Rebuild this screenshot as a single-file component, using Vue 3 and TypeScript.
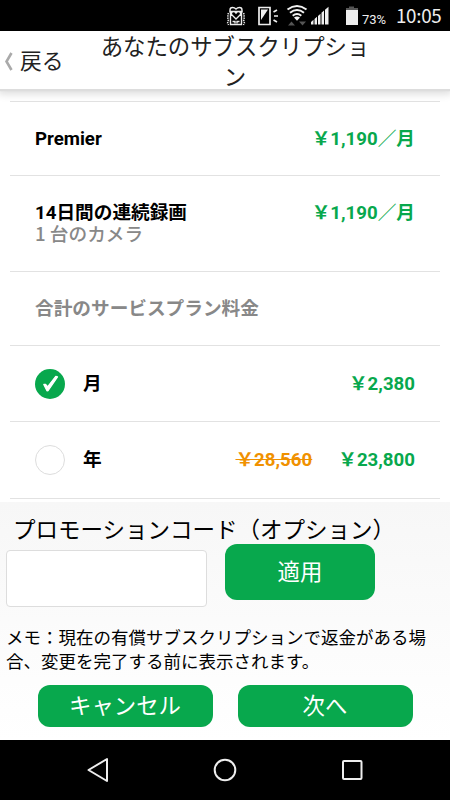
<script setup lang="ts">
import { ref } from 'vue'

interface PlanLine {
  name: string
  detail?: string
  price: string
}
interface Term {
  id: string
  label: string
  price: string
  oldPrice?: string
}

const lines: PlanLine[] = [
  { name: 'Premier', price: '￥1,190／月' },
  { name: '14日間の連続録画', detail: '1 台のカメラ', price: '￥1,190／月' },
]
const terms: Term[] = [
  { id: 'month', label: '月', price: '￥2,380' },
  { id: 'year', label: '年', price: '￥23,800', oldPrice: '￥28,560' },
]
const selected = ref('month')
const promo = ref('')
</script>

<template>
  <div class="screen">
    <div class="status">
      <svg class="status-icons" width="142" height="31" viewBox="0 0 142 31">
        <g fill="none" stroke="#eee" stroke-width="1.4">
          <path d="M10 12.500V10q0-2.500 2.500-2.500 2 0 3.500 1.500 1.500-1.500 3.500-1.500 2.500 0 2.500 2.500v2.500" />
          <path d="M10.500 11.500h11v13h-11zM16 19l-4.500-4.500q-.5-3 2-3 1.500 0 2.500 1.500 1-1.500 2.500-1.500 2.500 0 2 3z" />
          <path d="M12.500 21.500h2.500v2M19.500 21.500H17v2" />
          <path d="M8.500 13l-1 2 1 2-1 2 1 2-1 2 1 2M23.500 13l1 2-1 2 1 2-1 2 1 2-1 2" stroke-dasharray="1.500 1" />
          <path d="M39 7.500h11v17H39z" stroke-width="1.700" />
          <path d="M53.500 12l3.500-2M54 16h4M53.500 20l3.500 2" stroke-width="1.700" />
        </g>
        <path d="M41 9.500h7L41 20z" fill="#eee" />
        <g fill="none" stroke="#f2f2f2" stroke-width="2">
          <path d="M67.500 9.500q9.500-7 19 0M70 12.700q7-5.400 14 0M72.700 15.800q4.300-3.500 8.600 0" />
        </g>
        <path d="M74 17.500q3-2 6 0l-3 3.200z" fill="#f2f2f2" />
        <path d="M68 25.500l3.500-4 3.500 4zM79 21.500h7l-3.500 4z" fill="#555" />
        <path d="M91 24.500v-2.500l2.500-2.200v4.700zM94.500 24.500v-5.600l2.500-2.200v7.800zM98 24.500v-8.600l2.500-2.200v10.800zM101.500 24.500V12.800l2.500-2.200v13.900zM105 24.500V9.700l3.500-3v17.800z" fill="#f0f0f0" />
        <path d="M126 10V8h3V6.500h5V8h4v2z" fill="#555" />
        <rect x="126" y="10" width="12" height="15" fill="#eee" />
      </svg>
      <span class="battery">73%</span>
      <span class="clock">10:05</span>
    </div>

    <header class="header">
      <button class="back">
        <svg width="9" height="20" viewBox="0 0 9 20"><path d="M7.500 1L2.500 9.500l5 8.500" fill="none" stroke="#aaa" stroke-width="2.600" /></svg>
        <span>戻る</span>
      </button>
      <h1 class="title">あなたのサブスクリプション</h1>
    </header>

    <main class="list">
      <div v-for="line in lines" :key="line.name" class="row" :class="{ tall: line.detail }">
        <div class="name">
          <div>{{ line.name }}</div>
          <div v-if="line.detail" class="detail">{{ line.detail }}</div>
        </div>
        <div class="price">{{ line.price }}</div>
      </div>
      <div class="row total">合計のサービスプラン料金</div>
      <div v-for="term in terms" :key="term.id" class="row term" @click="selected = term.id">
        <span class="radio" :class="{ on: selected === term.id }">
          <svg v-if="selected === term.id" width="30" height="30" viewBox="0 0 30 30">
            <path d="M8.800 15.500l1.800-.2 2 2.500 8.200-10.500 1.700.6-9.300 13.600-1.200.3z" fill="#fff" stroke="#fff" stroke-width="1.300" stroke-linejoin="round" />
          </svg>
        </span>
        <span class="term-label">{{ term.label }}</span>
        <span v-if="term.oldPrice" class="old">{{ term.oldPrice }}</span>
        <span class="price">{{ term.price }}</span>
      </div>
    </main>

    <section class="footer">
      <label class="promo-label" for="promo">プロモーションコード（オプション）</label>
      <div class="promo">
        <input id="promo" v-model="promo" class="field" type="text" />
        <button class="btn apply">適用</button>
      </div>
      <p class="memo">メモ：現在の有償サブスクリプションで返金がある場合、変更を完了する前に表示されます。</p>
      <div class="actions">
        <button class="btn">キャンセル</button>
        <button class="btn">次へ</button>
      </div>
    </section>

    <nav class="nav">
      <svg width="24" height="28" viewBox="0 0 24 28"><path d="M2.500 14L21 3v22z" fill="none" stroke="#eee" stroke-width="2" stroke-linejoin="round" /></svg>
      <svg width="24" height="28" viewBox="0 0 24 28"><circle cx="12" cy="14" r="10.300" fill="none" stroke="#eee" stroke-width="2" /></svg>
      <svg width="24" height="28" viewBox="0 0 24 28"><rect x="3" y="5" width="18.500" height="18" rx="1" fill="none" stroke="#eee" stroke-width="2" /></svg>
    </nav>
  </div>
</template>

<style>
body {
  margin: 0;
}
</style>

<style scoped>
.screen {
  width: 450px;
  height: 800px;
  display: flex;
  flex-direction: column;
  overflow: hidden;
  background: #fff;
  color: #000;
  font-family: Roboto, "Noto Sans CJK JP", sans-serif;
}
button {
  border: 0;
  padding: 0;
  background: none;
  font-family: inherit;
}
.status {
  flex: none;
  height: 31px;
  background: #000;
  color: #eee;
  display: flex;
  padding-left: 220px;
  box-sizing: border-box;
}
.status-icons {
  flex: none;
}
.battery {
  font-size: 13px;
  line-height: 39px;
  width: 34px;
}
.clock {
  font-family: "Noto Sans CJK JP", sans-serif;
  font-size: 18.800px;
  font-weight: 400;
  line-height: 29px;
  letter-spacing: -0.300px;
}
.header {
  flex: none;
  height: 58px;
  display: flex;
  background: #fff;
  box-shadow: 0 2px 1px #ddd, 0 3px 8px 2px rgba(0, 0, 0, 0.14);
  color: #222;
  z-index: 1;
}
.back {
  display: flex;
  align-items: center;
  gap: 7px;
  width: 97px;
  padding: 3px 0 0 4px;
  box-sizing: border-box;
  font-size: 21.800px;
  line-height: 30px;
  color: #222;
}
.title {
  width: 276px;
  margin: 0;
  padding-top: 1px;
  font-size: 22.400px;
  font-weight: 400;
  line-height: 30px;
  text-align: center;
}
.list {
  flex: none;
  height: 413px;
  padding: 12px 10px 0;
  box-sizing: border-box;
  font-size: 18.670px;
  line-height: 22px;
  font-weight: 700;
}
.row {
  height: 74px;
  box-sizing: border-box;
  border-top: 1px solid #e2e2e2;
  padding: 26px 25px 0;
  display: flex;
  justify-content: space-between;
}
.row.tall {
  height: 96px;
}
.detail,
.total {
  color: #888;
}
.detail {
  font-family: "Noto Sans CJK JP", sans-serif;
  font-weight: 500;
  line-height: 18px;
}
.total {
  font-weight: 700;
}
.term {
  height: 76px;
  align-items: center;
  padding-top: 0;
  justify-content: flex-start;
}
.term:last-child {
  height: 78px;
  border-bottom: 1px solid #e2e2e2;
}
.radio {
  width: 30px;
  height: 30px;
  border-radius: 50%;
  box-sizing: border-box;
  border: 1px solid #ddd;
}
.radio.on {
  border: 0;
  background: #08a84d;
}
.radio svg {
  display: block;
}
.term-label {
  margin-left: 18px;
  margin-right: auto;
}
.price {
  color: #08a84d;
}
.old {
  color: #f09100;
  text-decoration: line-through;
  margin-right: 26px;
}
.footer {
  flex: none;
  height: 238px;
  padding: 14px 6px 0;
  box-sizing: border-box;
  background: linear-gradient(#f7f7f7, #fff);
  display: flex;
  flex-direction: column;
}
.promo-label {
  font-size: 22.500px;
  line-height: 29px;
  height: 27px;
  padding-left: 7px;
  white-space: nowrap;
}
.promo {
  display: flex;
  align-items: flex-end;
  gap: 18px;
  height: 64px;
}
.field {
  width: 201px;
  height: 57px;
  box-sizing: border-box;
  border: 1px solid #ddd;
  border-radius: 4px;
  background: #fff;
  margin: 0;
  font-size: 20px;
}
.btn {
  width: 175px;
  height: 42px;
  border-radius: 12px;
  background: #08a84d;
  color: #fff;
  font-size: 22.400px;
  line-height: 42px;
}
.btn.apply {
  width: 150px;
  height: 56px;
  line-height: 56px;
  margin-bottom: 7px;
}
.memo {
  margin: 19px 0 0;
  width: 424px;
  height: 48px;
  font-size: 17.500px;
  line-height: 24px;
}
.actions {
  display: flex;
  gap: 25px;
  margin: 11px 0 0 31.500px;
}
.nav {
  flex: none;
  height: 60px;
  background: #000;
  display: flex;
  justify-content: center;
  align-items: center;
  gap: 103px;
}
</style>
